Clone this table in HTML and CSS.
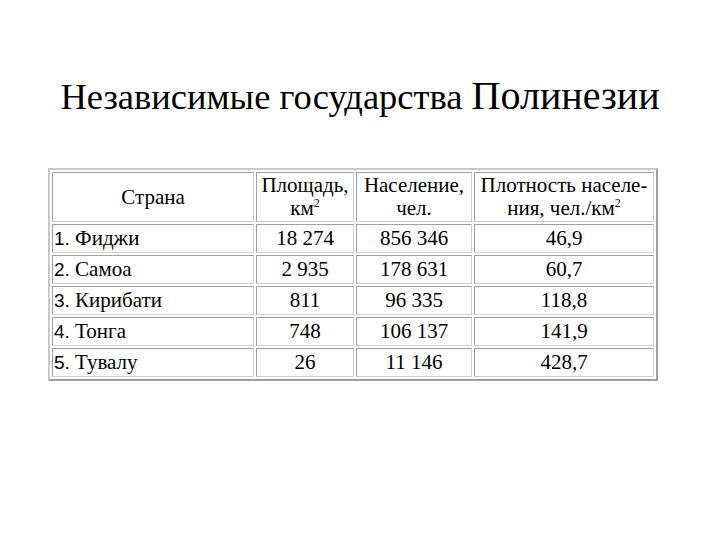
FILE: index.html
```html
<!DOCTYPE html>
<html>
<head>
<meta charset="utf-8">
<title>Независимые государства Полинезии</title>
<link rel="stylesheet" href="styles.css">
</head>
<body>
<h1 class="title">Независимые государства <span class="big">Полинезии</span></h1>
<table class="data">
  <colgroup>
    <col class="c1"><col class="c2"><col class="c3"><col class="c4">
  </colgroup>
  <thead>
    <tr>
      <th>Страна</th>
      <th>Площадь,<br>км<sup>2</sup></th>
      <th>Население,<br>чел.</th>
      <th>Плотность населе-<br>ния, чел./км<sup>2</sup></th>
    </tr>
  </thead>
  <tbody>
    <tr><td class="name"><span class="num">1.</span> Фиджи</td><td>18 274</td><td>856 346</td><td>46,9</td></tr>
    <tr><td class="name"><span class="num">2.</span> Самоа</td><td>2 935</td><td>178 631</td><td>60,7</td></tr>
    <tr><td class="name"><span class="num">3.</span> Кирибати</td><td>811</td><td>96 335</td><td>118,8</td></tr>
    <tr><td class="name"><span class="num">4.</span> Тонга</td><td>748</td><td>106 137</td><td>141,9</td></tr>
    <tr><td class="name"><span class="num">5.</span> Тувалу</td><td>26</td><td>11 146</td><td>428,7</td></tr>
  </tbody>
</table>
</body>
</html>
```
FILE: styles.css
```css
html, body {
  margin: 0;
  padding: 0;
  background: #ffffff;
}
body {
  width: 720px;
  height: 540px;
  font-family: "Liberation Serif", serif;
  color: #000;
  overflow: hidden;
}
.title {
  margin: 0;
  padding-top: 71px;
  height: 53px;
  text-align: center;
  font-family: "Liberation Serif", serif;
  font-weight: normal;
  font-size: 36.5px;
  line-height: 50px;
  white-space: nowrap;
}
.title .big {
  font-size: 40px;
}
.data {
  margin: 44px 0 0 48px;
  width: 610px;
  border-collapse: separate;
  border-spacing: 2px;
  border: 2px solid;
  border-color: #c8c8c8 #a0a0a0 #a0a0a0 #c8c8c8;
  font-family: "Liberation Serif", serif;
  font-size: 21px;
  table-layout: fixed;
}
.c1 { width: 202px; }
.c2 { width: 98px; }
.c3 { width: 116px; }
.c4 { width: auto; }
.data th, .data td {
  border: 1px solid;
  border-color: #a0a0a0 #d0d0d0 #d0d0d0 #a0a0a0;
  padding: 0 2px;
  text-align: center;
  font-weight: normal;
  line-height: 23px;
}
.data th {
  height: 48px;
  vertical-align: middle;
}
.data td {
  height: 27px;
}
.data td.name {
  text-align: left;
  padding-left: 1px;
}
.data .num {
  font-family: "Liberation Sans", sans-serif;
  font-size: 19px;
}
sup {
  font-size: 12px;
  line-height: 0;
  vertical-align: 8px;
}
```
